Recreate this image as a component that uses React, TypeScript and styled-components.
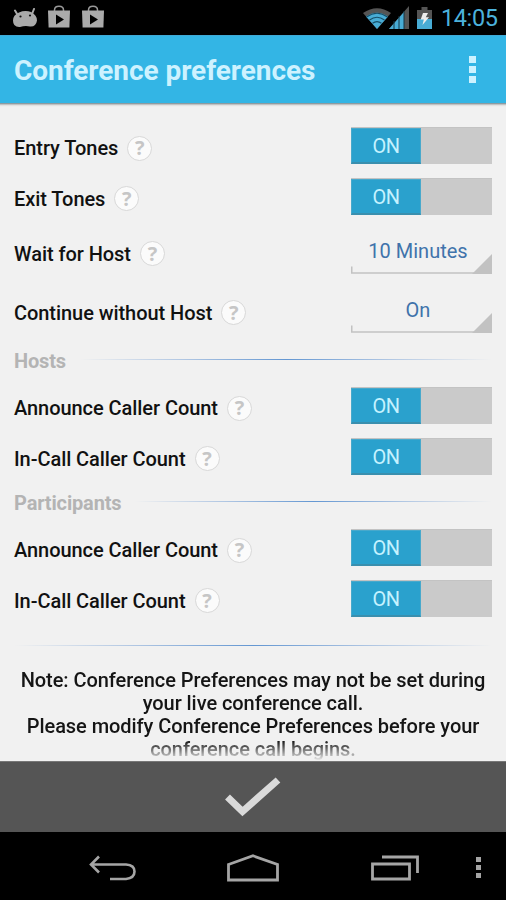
import React from "react";
import styled, { createGlobalStyle } from "styled-components";

const GlobalStyle = createGlobalStyle`
  * { box-sizing: border-box; }
  body { margin: 0; background: #000; font-family: Roboto, "Noto Sans", sans-serif; }
`;

const Screen = styled.div`
  width: 506px;
  height: 900px;
  display: flex;
  flex-direction: column;
  overflow: hidden;
  background: #f1f1f1;
`;

const StatusBar = styled.div`
  flex: none;
  height: 35px;
  padding: 0 9px 0 12px;
  display: flex;
  align-items: center;
  justify-content: space-between;
  background: #000;
`;

const StatusGroup = styled.div`
  display: flex;
  align-items: center;
  height: 35px;
`;

const Notifications = styled.div`
  display: flex;
  align-items: center;
  gap: 12px;
  padding-bottom: 3px;
  & > svg:first-child { margin: 3px -2px 0 0; }
`;

const RadioIcons = styled.div`
  display: flex;
  align-items: flex-end;
  margin-right: 8px;
  & > svg:first-child { margin-right: -2px; }
`;

const Clock = styled.span`
  width: 56px;
  margin-left: 9px;
  padding-top: 1px;
  font-size: 23.5px;
  line-height: 35px;
  letter-spacing: -0.4px;
  color: #4cb2dc;
  white-space: nowrap;
`;

const AppBar = styled.header`
  flex: none;
  height: 68px;
  padding: 2px 14px 0;
  display: flex;
  align-items: center;
  justify-content: space-between;
  background: #33b5e5;
  border-top: 1px solid #3fa9d6;
  box-shadow: 0 1px 0 #8c9ba1, 0 2px 0 #c0c2c3, 0 3px 1px #e2e2e2;
  z-index: 1;
`;

const Title = styled.h1`
  margin: 0;
  font-size: 28px;
  font-weight: 700;
  letter-spacing: -0.06px;
  color: #cdf2ff;
  white-space: nowrap;
`;

const Dots = styled.div<{ $size: number; $gap: number; $color: string }>`
  display: flex;
  flex-direction: column;
  gap: ${(p) => p.$gap}px;
  & > i {
    width: ${(p) => p.$size}px;
    height: ${(p) => p.$size}px;
    background: ${(p) => p.$color};
  }
`;

const MenuButton = styled.div`
  width: 39px;
  padding-bottom: 2px;
  display: flex;
  justify-content: center;
`;

const Content = styled.main`
  flex: none;
  height: 658px;
  padding: 18px 14px 0;
  overflow: hidden;
`;

const Row = styled.div<{ $height: number }>`
  height: ${(p) => p.$height}px;
  display: flex;
  align-items: center;
  justify-content: space-between;
`;

const Label = styled.div<{ $drop: number }>`
  display: flex;
  align-items: center;
  gap: 9px;
  padding-top: ${(p) => p.$drop}px;
  font-size: 20px;
  line-height: 26px;
  font-weight: 500;
  letter-spacing: -0.06px;
  color: #111;
  white-space: nowrap;
`;

const Help = styled.span`
  width: 25px;
  height: 25px;
  border: 1.5px solid #d8d8d8;
  border-radius: 50%;
  background: #fbfbfb;
  display: flex;
  align-items: center;
  justify-content: center;
  font: 700 20px/22px "Open Sans", sans-serif;
  color: #c6c6c6;
`;

const Track = styled.div`
  width: 141px;
  height: 37px;
  margin-bottom: 1px;
  background: #cacaca;
  border-top: 1px solid #c3c3c3;
`;

const Thumb = styled.div`
  width: 70px;
  height: 36px;
  background: #2aa1cd;
  border: 1px solid #48a9cc;
  border-bottom: 2px solid #3a8fae;
  text-align: center;
  font-size: 20px;
  line-height: 35px;
  letter-spacing: -0.4px;
  color: #c5f2ff;
`;

const Spinner = styled.div`
  width: 141px;
  height: 43px;
  padding-top: 9px;
  display: flex;
  flex-direction: column;
  text-align: center;
  font-size: 20px;
  line-height: 24px;
  color: #4073ab;
  & > span { padding-right: 7px; }
  & > svg { flex: none; display: block; margin-top: -10px; }
`;

const SectionHead = styled.div`
  height: 41px;
  display: flex;
  align-items: center;
  gap: 14px;
  font-size: 20px;
  font-weight: 700;
  letter-spacing: -0.15px;
  color: #b4b4b4;
`;

const Rule = styled.div`
  flex: 1;
  height: 1px;
  margin-bottom: 2px;
  background: linear-gradient(90deg, rgba(80, 135, 205, 0), rgba(80, 135, 205, 0.4) 25%, #6497d2 50%, rgba(80, 135, 205, 0.4) 75%, rgba(80, 135, 205, 0));
`;

const Divider = styled(Rule)`
  margin: 21px 0 23px;
`;

const Note = styled.p`
  margin: 0 -6px;
  text-align: center;
  font-size: 20px;
  font-weight: 500;
  letter-spacing: -0.06px;
  line-height: 23px;
  color: #151515;
  white-space: nowrap;
  -webkit-mask-image: linear-gradient(#000 78%, transparent 100%);
  mask-image: linear-gradient(#000 78%, transparent 100%);
`;

const ConfirmBar = styled.div`
  flex: none;
  height: 71px;
  display: flex;
  align-items: center;
  justify-content: center;
  background: #555;
  border-top: 1px solid #777;
`;

const NavBar = styled.nav`
  flex: none;
  height: 68px;
  padding-top: 3px;
  background: #000;
  display: grid;
  grid-template-columns: 28px 168px 114px 142px 54px;
  align-items: center;
  justify-items: center;
`;

const NavSlot = styled.div`
  grid-column: 2 / 3;
  &:nth-child(2) { grid-column: 3; }
  &:nth-child(3) { grid-column: 4; margin-left: 28px; }
  &:nth-child(4) { grid-column: 5; margin-right: 2px; }
  svg { display: block; }
`;

const AndroidHead = () => (
  <svg width="26" height="20" viewBox="0 0 26 20">
    <path d="M3 2.500l3 5M22 1l-2 5" stroke="#aaa" strokeWidth="2" strokeLinecap="round" />
    <path d="M7 4.500Q13 2 19 4Q25 7 25 12.500Q24 19 18 18.500Q13 17.500 8 19Q1 19.500 1 12.500Q1 7 7 4.500Z" fill="#aaa" />
    <circle cx="8.500" cy="8.500" r="1.100" fill="#111" />
    <circle cx="18" cy="7.500" r="1.100" fill="#111" />
  </svg>
);

const PlayBag = () => (
  <svg width="22" height="23" viewBox="0 0 22 23">
    <path d="M6.500 6V5Q6.500 1.200 11 1.200T15.500 5V6" fill="none" stroke="#999" strokeWidth="1.500" />
    <path d="M0 5.500h22l-.6 17H.6z" fill="#aaa" />
    <path d="M8 9.500v10l8-5z" fill="#000" />
  </svg>
);

const Wifi = () => (
  <svg width="28" height="21" viewBox="0 0 28 21">
    <path d="M0 5Q14-4.500 28 5L14 21z" fill="#555" />
    <path d="M3 8.500Q14 .8 25 8.500L14 21z" fill="#48acd5" />
    <path d="M3.500 9Q14 1.500 24.500 9M6.500 12Q14 6.500 21.500 12M9.500 15.300Q14 12 18.500 15.300" fill="none" stroke="#164e68" strokeWidth="1.200" />
  </svg>
);

const Signal = () => (
  <svg width="20" height="23" viewBox="0 0 20 23">
    <path d="M20 0v23H0z" fill="#555" />
    <path d="M15 6v17H0z" fill="#48acd5" />
    <path d="M5 15v8M10 10v13M15 5v18" stroke="#123746" strokeWidth="1" />
  </svg>
);

const Battery = () => (
  <svg width="15" height="22" viewBox="0 0 15 22">
    <path d="M4.500 0h6v3H15v19H0V3h4.500z" fill="#555" />
    <path d="M0 12h15v10H0z" fill="#48acd5" />
    <path d="M6 6h5L8.800 10.300H12L5.500 18l1.300-5.500H3.700z" fill="#eee" />
  </svg>
);

const SpinnerLine = () => (
  <svg width="141" height="21" viewBox="0 0 141 21">
    <path d="M.75 13.500V20H141" fill="none" stroke="#c2c2c2" strokeWidth="1.500" />
    <path d="M141 1v20h-20z" fill="#c2c2c2" />
  </svg>
);

const MenuDots = ({ size, gap, color }: { size: number; gap: number; color: string }) => (
  <Dots $size={size} $gap={gap} $color={color}>
    <i />
    <i />
    <i />
  </Dots>
);

const SettingLabel = ({ text, drop }: { text: string; drop: number }) => (
  <Label $drop={drop}>
    <span>{text}</span>
    <Help>?</Help>
  </Label>
);

const ToggleRow = ({ text, height }: { text: string; height: number }) => (
  <Row $height={height}>
    <SettingLabel text={text} drop={4} />
    <Track>
      <Thumb>ON</Thumb>
    </Track>
  </Row>
);

const SpinnerRow = ({ text, value }: { text: string; value: string }) => (
  <Row $height={59}>
    <SettingLabel text={text} drop={4} />
    <Spinner>
      <span>{value}</span>
      <SpinnerLine />
    </Spinner>
  </Row>
);

const Section = ({ title }: { title: string }) => (
  <SectionHead>
    <span>{title}</span>
    <Rule />
  </SectionHead>
);

export default function App() {
  return (
    <>
      <GlobalStyle />
      <Screen>
        <StatusBar>
          <Notifications>
            <AndroidHead />
            <PlayBag />
            <PlayBag />
          </Notifications>
          <StatusGroup>
            <RadioIcons>
              <Wifi />
              <Signal />
            </RadioIcons>
            <Battery />
            <Clock>14:05</Clock>
          </StatusGroup>
        </StatusBar>
        <AppBar>
          <Title>Conference preferences</Title>
          <MenuButton>
            <MenuDots size={7} gap={3} color="#cdf2ff" />
          </MenuButton>
        </AppBar>
        <Content>
          <ToggleRow text="Entry Tones" height={50} />
          <ToggleRow text="Exit Tones" height={51} />
          <SpinnerRow text="Wait for Host" value="10 Minutes" />
          <SpinnerRow text="Continue without Host" value="On" />
          <Section title="Hosts" />
          <ToggleRow text="Announce Caller Count" height={50} />
          <ToggleRow text="In-Call Caller Count" height={51} />
          <Section title="Participants" />
          <ToggleRow text="Announce Caller Count" height={50} />
          <ToggleRow text="In-Call Caller Count" height={51} />
          <Divider />
          <Note>
            Note: Conference Preferences may not be set during
            <br />
            your live conference call.
            <br />
            Please modify Conference Preferences before your
            <br />
            conference call begins.
          </Note>
        </Content>
        <ConfirmBar>
          <svg width="56" height="40" viewBox="0 0 56 40">
            <path d="M2.500 20L17.500 34.500L53 3" fill="none" stroke="#dadada" strokeWidth="7" />
          </svg>
        </ConfirmBar>
        <NavBar>
          <NavSlot>
            <svg width="47" height="26" viewBox="0 0 47 26" fill="none" stroke="#a5a5a5" strokeWidth="2.600">
              <path d="M10 1.500L2 9.500L10 17.500M2 9.500H37Q45.500 10 45.500 16.500T37 24H21" />
            </svg>
          </NavSlot>
          <NavSlot>
            <svg width="52" height="28" viewBox="0 0 52 28" fill="none" stroke="#a5a5a5" strokeWidth="2.800">
              <path d="M1.500 10.500L26 1.800L50.500 10.500V26H1.500Z" />
            </svg>
          </NavSlot>
          <NavSlot>
            <svg width="48" height="26" viewBox="0 0 48 26" fill="none" stroke="#a5a5a5" strokeWidth="2.800">
              <path d="M1.500 9H38.500V24H1.500ZM11 2H46.500V18" />
            </svg>
          </NavSlot>
          <NavSlot>
            <MenuDots size={5} gap={3} color="#a5a5a5" />
          </NavSlot>
        </NavBar>
      </Screen>
    </>
  );
}
